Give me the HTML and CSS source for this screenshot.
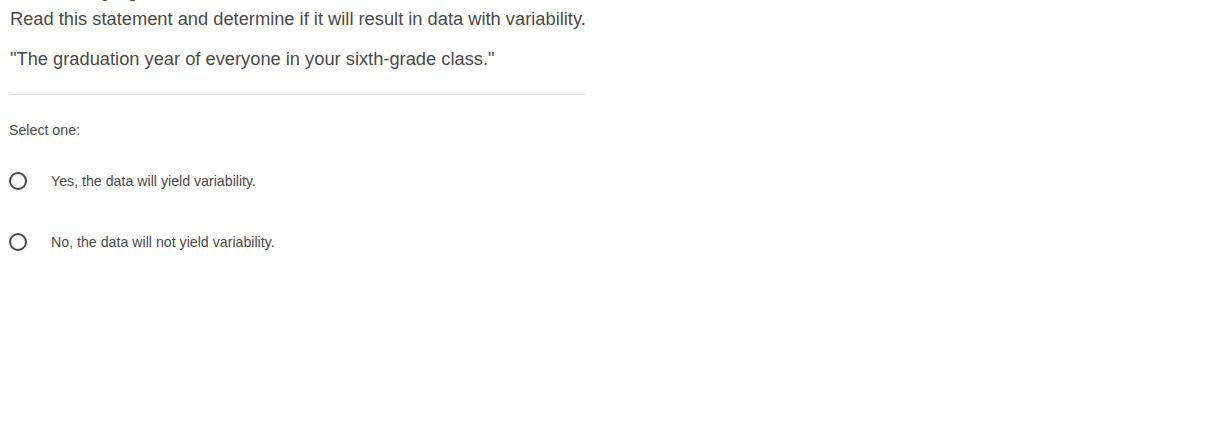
FILE: index.html
```html
<!DOCTYPE html>
<html>
<head>
<meta charset="utf-8">
<link rel="stylesheet" href="styles.css">
</head>
<body>
<div class="question">
  <div class="title">Variability Question</div>
  <p class="prompt first">Read this statement and determine if it will result in data with variability.</p>
  <p class="prompt">"The graduation year of everyone in your sixth-grade class."</p>
  <hr class="divider">
  <div class="select">Select one:</div>
  <label class="option first-opt"><span class="radio"></span><span class="opt-text">Yes, the data will yield variability.</span></label>
  <label class="option"><span class="radio"></span><span class="opt-text">No, the data will not yield variability.</span></label>
</div>
</body>
</html>
```

FILE: styles.css
```css
html, body {
  margin: 0;
  padding: 0;
  background: #fff;
}
body {
  font-family: "Liberation Sans", Arial, sans-serif;
  color: #4a4a4a;
  overflow: hidden;
}
.question {
  width: 576px;
  padding-left: 9px;
}
.title {
  margin: -24px 0 0 1px;
  height: 24px;
  font-size: 22px;
  line-height: 26px;
  font-weight: bold;
  color: #4a4a4a;
}
.prompt {
  margin: 0 0 13px 1px;
  font-size: 18.3px;
  line-height: 27px;
  white-space: nowrap;
}
.prompt.first {
  margin-top: 5px;
}
.divider {
  border: 0;
  border-top: 1px solid #dcdcdc;
  margin: 22px 0 0 0;
}
.select {
  margin-top: 25px;
  font-size: 14.2px;
  line-height: 20px;
}
.option {
  display: flex;
  align-items: center;
  gap: 24px;
  font-size: 14.2px;
  line-height: 20px;
}
.option.first-opt { margin-top: 31px; }
.option + .option { margin-top: 41px; }
.radio {
  width: 14px;
  height: 14px;
  border: 2px solid #4a4a4a;
  border-radius: 50%;
  flex: none;
}
```
